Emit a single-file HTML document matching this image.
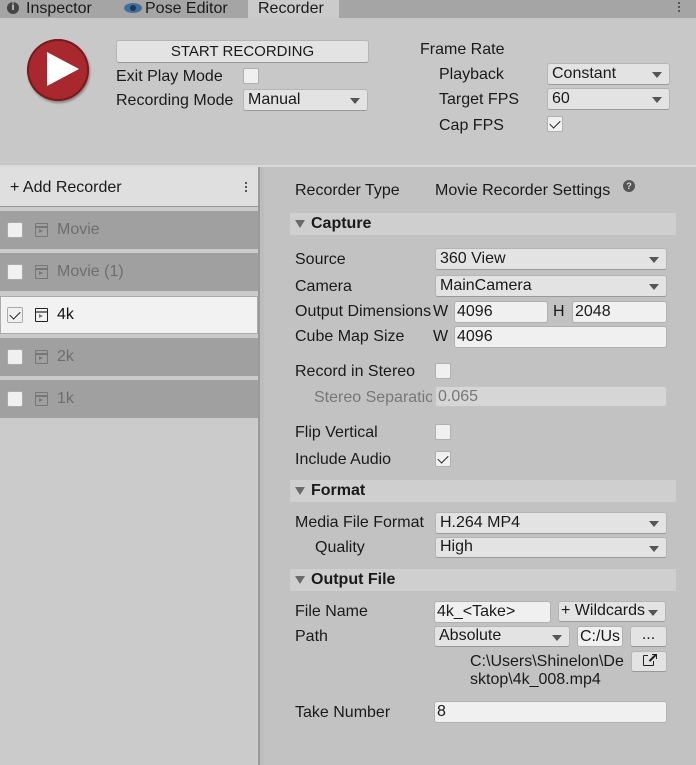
<!DOCTYPE html>
<html><head><meta charset="utf-8"><style>
*{box-sizing:border-box;margin:0;padding:0}
body{width:696px;height:765px;overflow:hidden;background:#c2c2c2;font-family:"Liberation Sans","DejaVu Sans",sans-serif;font-size:16px;color:#1a1a1a;position:relative}
div,span{position:absolute}
.t{white-space:nowrap;line-height:18px}
.dd{background:#e3e3e3;border:1px solid #b5b5b5;border-bottom-color:#999;border-radius:3px;padding-left:4px;line-height:19px;white-space:nowrap}
.dd:after{content:"";position:absolute;right:7px;top:8px;border-left:5px solid transparent;border-right:5px solid transparent;border-top:6px solid #555}
.in{background:#f0f0f0;border:1px solid #b0b0b0;border-radius:3px;padding-left:2px;line-height:20px;white-space:nowrap;overflow:hidden}
.cb{width:16px;height:16px;background:#f0f0f0;border:1px solid #b0b0b0;border-radius:2px}
.ck:after{content:"";position:absolute;left:4px;top:1px;width:5px;height:9px;border:solid #222;border-width:0 1.5px 1.5px 0;transform:rotate(45deg)}
.hd{background:#cfcfcf;height:22px;left:290px;width:386px}
.hd span{left:5px;top:7px;border-left:5px solid transparent;border-right:5px solid transparent;border-top:8px solid #6a6a6a}
.hd b{position:absolute;left:21px;top:2px;font-weight:bold}
.btn{background:#e3e3e3;border:1px solid #b5b5b5;border-bottom-color:#999;border-radius:3px;text-align:center;line-height:19px}
.item{left:0;width:258px;height:38px;background:#a0a0a0}
.item .cb{left:7px;top:11px;border-color:#aaa}
.item .ic{left:35px;top:12px;width:13px;height:14px;border:1.5px solid #777;border-radius:1px}
.item .ic:before{content:"";position:absolute;left:0;right:0;top:2px;height:1.5px;background:#777}
.item .ic:after{content:"";position:absolute;left:3px;top:5px;border-top:2.5px solid transparent;border-bottom:2.5px solid transparent;border-left:4px solid #777}
.item .t{left:57px;top:10px;color:#6e6e6e}
</style></head><body>
<div style="left:0;top:0;width:696px;height:18px;background:#a5a5a5"></div>
<div style="left:7px;top:2px;width:12px;height:12px;border-radius:50%;background:#444;color:#ddd;font-size:10px;font-weight:bold;text-align:center;line-height:12px">i</div>
<div class="t" style="left:26px;top:0px">Inspector</div>
<div style="left:124px;top:3px;width:18px;height:10px;border-radius:50%;background:#3c6ea0"></div>
<div style="left:130px;top:5px;width:6px;height:6px;border-radius:50%;background:#1c3550"></div>
<div class="t" style="left:145px;top:0px">Pose Editor</div>
<div style="left:248px;top:0;width:91px;height:18px;background:#cbcbcb"></div>
<div class="t" style="left:258px;top:0px">Recorder</div>
<div style="left:678px;top:2px;width:2px;height:2px;background:#555;box-shadow:0 4px #555,0 8px #555"></div>
<div style="left:0;top:18px;width:696px;height:148px;background:#c8c8c8"></div>
<div style="left:0;top:165px;width:696px;height:2px;background:#dadada"></div>
<div style="left:27px;top:39px;width:62px;height:62px;border-radius:50%;background:#a8282d;box-shadow:inset 0 0 0 2px #7a1a1e,1px 2px 2px rgba(0,0,0,.35)"></div>
<div style="left:47px;top:52px;border-top:17px solid transparent;border-bottom:17px solid transparent;border-left:32px solid #fff"></div>
<div class="btn" style="left:116px;top:40px;width:253px;height:23px;line-height:21px;font-size:15px">START RECORDING</div>
<div class="t" style="left:116px;top:68px">Exit Play Mode</div>
<div class="cb" style="left:243px;top:68px"></div>
<div class="t" style="left:116px;top:92px">Recording Mode</div>
<div class="dd" style="left:243px;top:89px;width:125px;height:22px">Manual</div>
<div class="t" style="left:420px;top:41px">Frame Rate</div>
<div class="t" style="left:439px;top:66px">Playback</div>
<div class="dd" style="left:547px;top:63px;width:123px;height:22px">Constant</div>
<div class="t" style="left:439px;top:91px">Target FPS</div>
<div class="dd" style="left:547px;top:88px;width:123px;height:22px">60</div>
<div class="t" style="left:439px;top:117px">Cap FPS</div>
<div class="cb ck" style="left:547px;top:116px"></div>
<div style="left:0;top:167px;width:258px;height:598px;background:#cbcbcb"></div>
<div style="left:0;top:167px;width:258px;height:40px;background:#dfdfdf;border-bottom:1px solid #999"></div>
<div class="t" style="left:10px;top:179px">+ Add Recorder</div>
<div style="left:245px;top:182px;width:2px;height:2px;background:#555;box-shadow:0 4px #555,0 8px #555"></div>
<div class="item" style="top:211px"><div class="cb"></div><div class="ic"></div><div class="t">Movie</div></div>
<div class="item" style="top:253px"><div class="cb"></div><div class="ic"></div><div class="t">Movie (1)</div></div>
<div class="item" style="top:296px;background:#f2f2f2;border:1px solid #aaa"><div class="cb ck" style="left:6px;top:10px"></div><div class="ic" style="left:34px;top:11px;border-color:#222"></div><div class="t" style="left:56px;top:9px;color:#111">4k</div></div>
<div class="item" style="top:338px"><div class="cb"></div><div class="ic"></div><div class="t">2k</div></div>
<div class="item" style="top:380px"><div class="cb"></div><div class="ic"></div><div class="t">1k</div></div>
<div style="left:258px;top:167px;width:6px;height:598px;background:#bdbdbd;border-left:2px solid #9a9a9a"></div>
<div class="t" style="left:295px;top:182px">Recorder Type</div>
<div class="t" style="left:435px;top:182px">Movie Recorder Settings</div>
<div style="left:623px;top:180px;width:12px;height:12px;border-radius:50%;background:#555;color:#ddd;font-size:9px;font-weight:bold;text-align:center;line-height:12px">?</div>
<div class="hd" style="top:213px"><span></span><b>Capture</b></div>
<div class="t" style="left:295px;top:251px">Source</div>
<div class="dd" style="left:435px;top:248px;width:232px;height:22px">360 View</div>
<div class="t" style="left:295px;top:278px">Camera</div>
<div class="dd" style="left:435px;top:275px;width:232px;height:22px">MainCamera</div>
<div class="t" style="left:295px;top:303px;width:138px;overflow:hidden">Output Dimensions</div>
<div class="t" style="left:433px;top:303px">W</div>
<div class="in" style="left:454px;top:301px;width:94px;height:22px">4096</div>
<div class="t" style="left:553px;top:303px">H</div>
<div class="in" style="left:572px;top:301px;width:95px;height:22px">2048</div>
<div class="t" style="left:295px;top:328px">Cube Map Size</div>
<div class="t" style="left:433px;top:328px">W</div>
<div class="in" style="left:454px;top:326px;width:213px;height:22px">4096</div>
<div class="t" style="left:295px;top:363px">Record in Stereo</div>
<div class="cb" style="left:435px;top:363px"></div>
<div class="t" style="left:314px;top:389px;width:118px;overflow:hidden;color:#777">Stereo Separation</div>
<div class="in" style="left:435px;top:386px;width:232px;height:21px;background:#d6d6d6;border-color:#c4c4c4;color:#777;line-height:19px">0.065</div>
<div class="t" style="left:295px;top:424px">Flip Vertical</div>
<div class="cb" style="left:435px;top:424px"></div>
<div class="t" style="left:295px;top:451px">Include Audio</div>
<div class="cb ck" style="left:435px;top:451px"></div>
<div class="hd" style="top:480px"><span></span><b>Format</b></div>
<div class="t" style="left:295px;top:514px">Media File Format</div>
<div class="dd" style="left:435px;top:512px;width:232px;height:22px">H.264 MP4</div>
<div class="t" style="left:315px;top:539px">Quality</div>
<div class="dd" style="left:435px;top:537px;width:232px;height:21px;line-height:18px">High</div>
<div class="hd" style="top:569px"><span></span><b>Output File</b></div>
<div class="t" style="left:295px;top:603px">File Name</div>
<div class="in" style="left:434px;top:601px;width:117px;height:22px">4k_&lt;Take&gt;</div>
<div class="dd" style="left:558px;top:601px;width:108px;height:21px;padding-left:2px;line-height:18px;padding-right:14px;overflow:hidden">+ Wildcards</div>
<div class="t" style="left:295px;top:628px">Path</div>
<div class="dd" style="left:434px;top:626px;width:136px;height:21px;line-height:18px">Absolute</div>
<div class="in" style="left:577px;top:626px;width:46px;height:21px;line-height:19px">C:/Us</div>
<div class="btn" style="left:630px;top:626px;width:37px;height:21px;line-height:16px">...</div>
<div class="t" style="left:470px;top:653px">C:\Users\Shinelon\De</div>
<div class="t" style="left:470px;top:671px">sktop\4k_008.mp4</div>
<div class="btn" style="left:631px;top:651px;width:36px;height:21px"></div>
<div style="left:643px;top:655px;width:11px;height:11px;border:1.5px solid #222;border-radius:1px"></div>
<div style="left:648px;top:653px;width:9px;height:8px;background:#e3e3e3"></div>
<div style="left:648px;top:657px;width:9px;height:1.5px;background:#222;transform:rotate(-45deg)"></div>
<div style="left:652px;top:654px;width:5px;height:5px;border-top:1.5px solid #222;border-right:1.5px solid #222"></div>
<div class="t" style="left:295px;top:704px">Take Number</div>
<div class="in" style="left:434px;top:701px;width:233px;height:22px">8</div>
</body></html>
